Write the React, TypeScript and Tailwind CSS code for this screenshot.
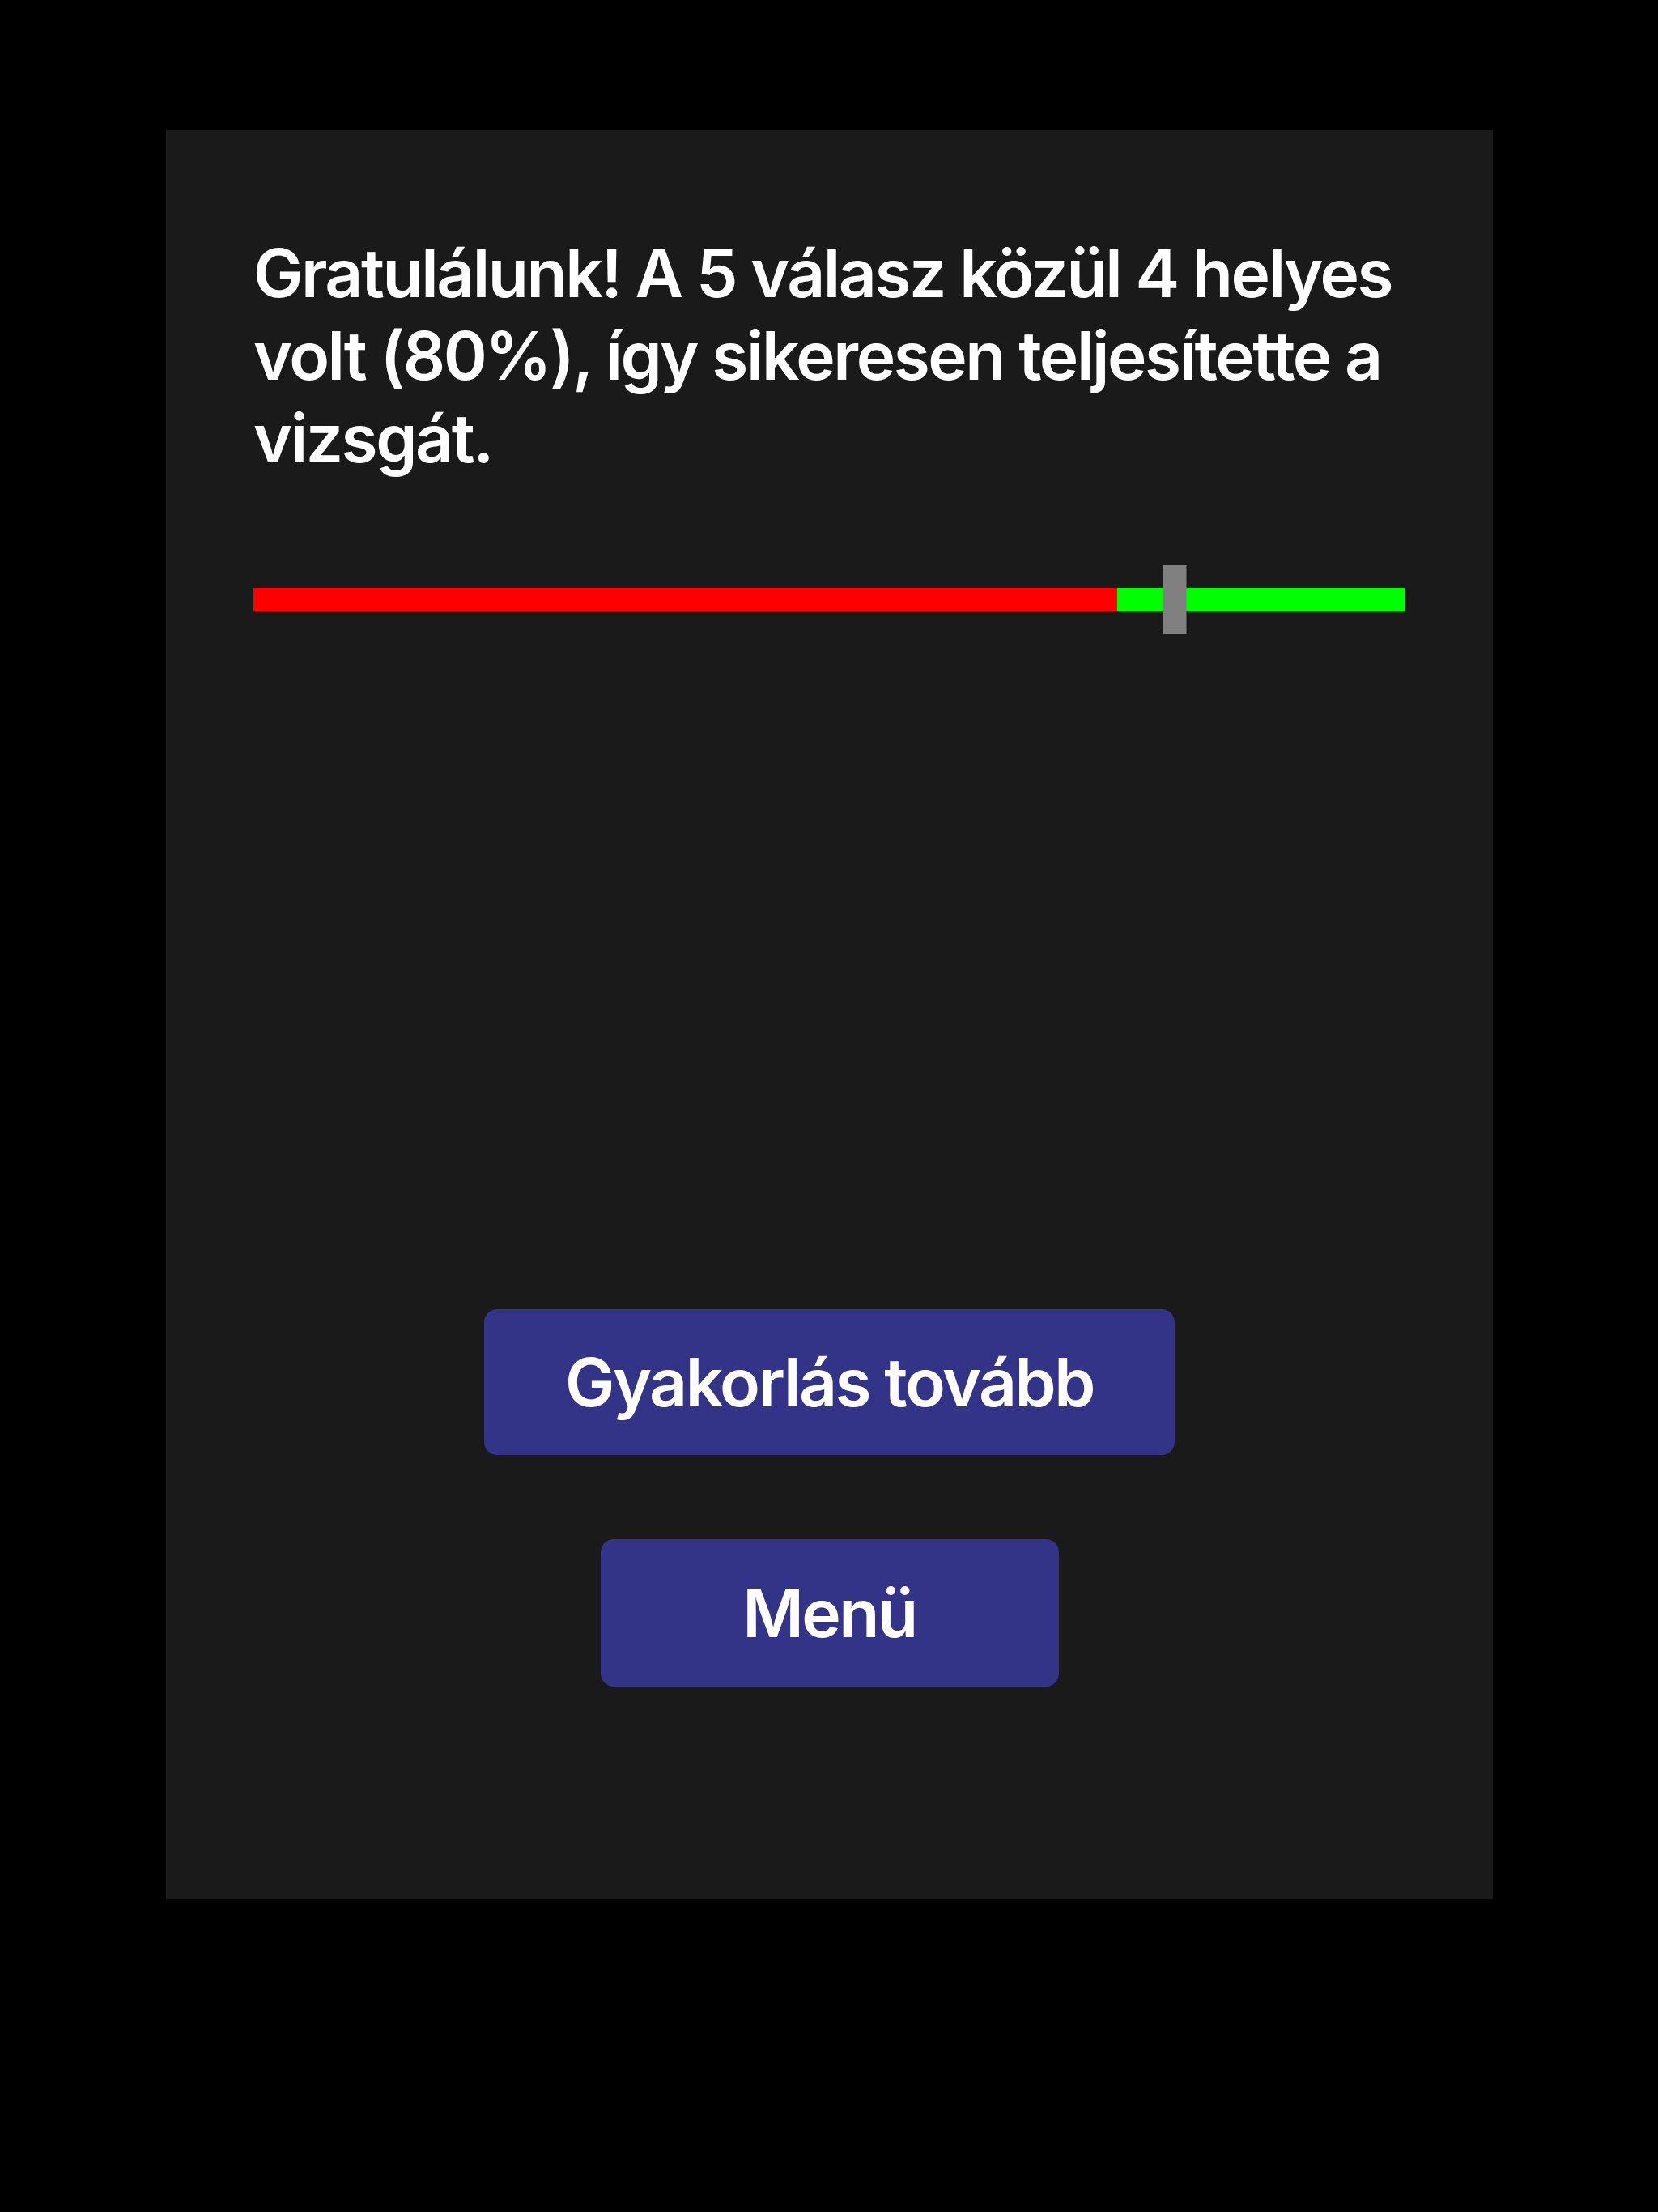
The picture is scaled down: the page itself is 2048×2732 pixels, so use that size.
export default function App() {
  const score = 80
  const passMark = 75

  return (
    <div className="min-h-[2732px] w-full bg-black pt-[160px] pl-[205px]" style={{ fontFamily: 'Inter, "Noto Sans", sans-serif' }}>
      <div className="flex h-[2186px] w-[1639px] flex-col bg-[#1a1a1a] px-[108px] pt-[127px]">
        {/* result text */}
        <p className="text-[82px] leading-[102px] font-semibold tracking-[-0.03em] text-white">
          Gratulálunk! A 5 válasz közül 4 helyes volt (80%), így sikeresen teljesítette a vizsgát.
        </p>

        {/* score bar */}
        <div className="relative mt-[105px] flex h-[85px] items-center">
          <div className="flex h-[29px] w-full">
            <div className="h-full bg-[#ff0000]" style={{ width: `${passMark}%` }} />
            <div className="h-full flex-1 bg-[#00ff00]" />
          </div>
          <div
            className="absolute top-0 h-[85px] w-[29px] -translate-x-1/2 bg-[#808080]"
            style={{ left: `${score}%` }}
          />
        </div>

        {/* actions */}
        <div className="mt-[834px] flex flex-col items-center gap-[104px]">
          <button className="flex h-[180px] w-[853px] items-center justify-center rounded-[16px] bg-[#333388] text-[82px] font-semibold tracking-[-0.03em] text-white">
            Gyakorlás tovább
          </button>
          <button className="flex h-[182px] w-[566px] items-center justify-center rounded-[16px] bg-[#333388] text-[82px] font-semibold tracking-[-0.03em] text-white">
            Menü
          </button>
        </div>
      </div>
    </div>
  )
}
